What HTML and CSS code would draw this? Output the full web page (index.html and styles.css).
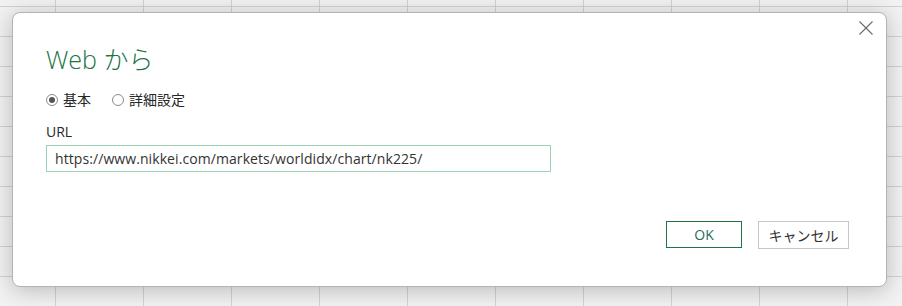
FILE: index.html
```html
<!DOCTYPE html>
<html lang="ja">
<head>
<meta charset="utf-8">
<link rel="stylesheet" href="styles.css">
</head>
<body>
<div class="sheet">
  <div class="dialog">
    <button class="close" aria-label="閉じる">
      <svg width="16" height="16" viewBox="0 0 16 16"><path d="M1.5 1.5 L14.5 14.5 M14.5 1.5 L1.5 14.5" stroke="#6b6b6b" stroke-width="1.1" fill="none"/></svg>
    </button>
    <h1 class="title">Web から</h1>
    <div class="modes">
      <label class="radio"><span class="dot checked"></span>基本</label>
      <label class="radio"><span class="dot"></span>詳細設定</label>
    </div>
    <div class="field">
      <div class="label">URL</div>
      <div class="input">https://www.nikkei.com/markets/worldidx/chart/nk225/</div>
    </div>
    <div class="actions">
      <button class="btn primary">OK</button>
      <button class="btn">キャンセル</button>
    </div>
  </div>
</div>
</body>
</html>
```
FILE: styles.css
```css
html, body {
  margin: 0;
  padding: 0;
}
body {
  width: 902px;
  height: 306px;
  overflow: hidden;
  font-family: "Open Sans", "Noto Sans CJK JP", sans-serif;
  background-color: #f2f2f2;
  background-image:
    linear-gradient(to right, #d2d2d2 1px, transparent 1px),
    linear-gradient(to bottom, #d2d2d2 1px, transparent 1px);
  background-size: 88px 30px;
  background-position: 55px 0, 0 6px;
}
.sheet {
  padding: 12px 15px 19px 12px;
  height: 306px;
  box-sizing: border-box;
}
.dialog {
  position: relative;
  box-sizing: border-box;
  width: 875px;
  height: 275px;
  background: #fff;
  border: 1px solid #b4b4b4;
  border-radius: 8px;
  box-shadow: 0 3px 22px rgba(0, 0, 0, 0.24);
  padding: 30px 37px 0 33px;
  display: flex;
  flex-direction: column;
}
.close {
  position: absolute;
  top: 1px;
  right: 6px;
  width: 28px;
  height: 28px;
  padding: 0;
  border: 0;
  background: transparent;
  display: flex;
  align-items: center;
  justify-content: center;
}
.title {
  margin: 0;
  font-weight: 300;
  font-size: 25px;
  line-height: 33px;
  color: #217346;
}
.modes {
  display: flex;
  gap: 21px;
  margin-top: 14px;
  font-size: 14px;
  line-height: 20px;
  color: #262626;
}
.radio {
  display: flex;
  align-items: center;
  gap: 5px;
}
.dot {
  box-sizing: border-box;
  width: 12px;
  height: 12px;
  border: 1px solid #8a8a8a;
  border-radius: 50%;
  position: relative;
}
.dot.checked::after {
  content: "";
  position: absolute;
  left: 2px;
  top: 2px;
  width: 6px;
  height: 6px;
  border-radius: 50%;
  background: #555;
}
.field {
  margin-top: 12px;
}
.label {
  font-size: 14px;
  line-height: 20px;
  color: #262626;
}
.input {
  box-sizing: border-box;
  margin-top: 3px;
  width: 505px;
  height: 27px;
  border: 1px solid #9ad3b1;
  padding: 0 8px;
  font-size: 14px;
  line-height: 25px;
  letter-spacing: 0.08px;
  color: #333;
}
.actions {
  display: flex;
  justify-content: flex-end;
  gap: 16px;
  margin-top: 49px;
}
.btn {
  box-sizing: border-box;
  width: 91px;
  height: 28px;
  background: #fff;
  border: 1px solid #c6c6c6;
  font-family: inherit;
  font-size: 14px;
  color: #333;
  padding: 0;
}
.btn.primary {
  width: 76px;
  height: 27px;
  border: 1px solid #217346;
  color: #2a6b59;
}
```
